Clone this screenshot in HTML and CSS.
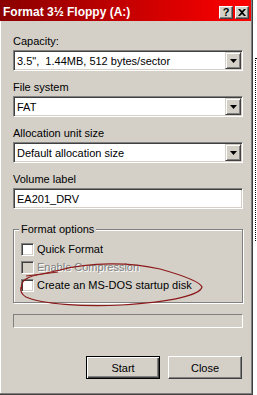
FILE: index.html
```html
<!DOCTYPE html>
<html lang="en">

<head>
  <meta charset="UTF-8">
  <title>Format 3½ Floppy (A:)</title>
  <link rel="stylesheet" href="styles.css">
</head>

<body>
  <div class="window">
    <div class="titlebar">
      <span class="title">Format 3½ Floppy (A:)</span>
      <div class="title-buttons">
        <span class="tbtn">?</span>
        <span class="tbtn">
          <svg width="8" height="7" viewBox="0 0 8 7"><path d="M0 0h2l2 2 2-2h2L5 3.5 8 7H6L4 5 2 7H0l3-3.5z" fill="#000"/></svg>
        </span>
      </div>
    </div>

    <div class="content">
      <div class="field-label">Capacity:</div>
      <div class="combo">
        <span class="combo-text">3.5",&nbsp; 1.44MB, 512 bytes/sector</span>
        <span class="combo-btn"><svg width="7" height="4" viewBox="0 0 7 4"><path d="M0 0h7L3.5 4z" fill="#000"/></svg></span>
      </div>

      <div class="field-label">File system</div>
      <div class="combo">
        <span class="combo-text">FAT</span>
        <span class="combo-btn"><svg width="7" height="4" viewBox="0 0 7 4"><path d="M0 0h7L3.5 4z" fill="#000"/></svg></span>
      </div>

      <div class="field-label">Allocation unit size</div>
      <div class="combo">
        <span class="combo-text">Default allocation size</span>
        <span class="combo-btn"><svg width="7" height="4" viewBox="0 0 7 4"><path d="M0 0h7L3.5 4z" fill="#000"/></svg></span>
      </div>

      <div class="field-label">Volume label</div>
      <div class="textbox">EA201_DRV</div>

      <div class="group">
        <div class="group-title">Format options</div>
        <div class="options">
          <div class="option"><span class="check"></span>Quick Format</div>
          <div class="option disabled"><span class="check"></span>Enable Compression</div>
          <div class="option"><span class="check"></span>Create an MS-DOS startup disk</div>
        </div>
      </div>

      <div class="progress"></div>

      <div class="actions">
        <button class="btn default">Start</button>
        <button class="btn">Close</button>
      </div>
    </div>

    <!-- hand drawn mark over the options -->
    <svg class="scribble" width="253" height="395" viewBox="0 0 253 395">
      <path d="M22 289 C19 281 28 276 42 274 L60 270 C90 262 130 262 160 269 C185 276 200 282 202 287 C200 295 172 302 122 305 C82 307 42 304 26 297 C21 294 20 291 21 287" fill="none" stroke="#8c1a1a" stroke-width="1.2"/>
      <path d="M26 276 L58 272" fill="none" stroke="#8c1a1a" stroke-width="1.1"/>
    </svg>
  </div>

  <!-- edge of whatever sits behind the dialog -->
  <div class="edge"></div>
</body>

</html>
```

FILE: styles.css
```css
body {
  margin: 0;
  background: #fff;
  font-family: "Liberation Sans", Arial, sans-serif;
  font-size: 11px;
  color: #000;
  display: flex;
  align-items: flex-start;
}

.window {
  position: relative;
  flex: none;
  width: 253px;
  height: 395px;
  box-sizing: border-box;
  background: #d4d0c8;
  border-right: 1px solid #404040;
  border-bottom: 1px solid #404040;
  box-shadow: inset -1px -1px #808080, inset 1px 0 #fff;
  display: flex;
  flex-direction: column;
}

.titlebar {
  height: 21px;
  margin-right: 1px;
  padding: 0 2px 0 3px;
  background: linear-gradient(90deg, #8a0000, #ff0000);
  display: flex;
  align-items: center;
  justify-content: space-between;
}

.title {
  color: #fff;
  font-weight: bold;
  font-size: 12px;
  padding-top: 3px;
}

.title-buttons {
  display: flex;
  gap: 2px;
  padding-top: 3px;
}

.tbtn {
  width: 14px;
  height: 13px;
  box-sizing: border-box;
  background: #d4d0c8;
  border: 1px solid;
  border-color: #fff #404040 #404040 #fff;
  box-shadow: inset -1px -1px #808080;
  display: flex;
  align-items: center;
  justify-content: center;
  font-weight: bold;
  font-size: 11px;
}

.content {
  padding: 14px 9px 0 13px;
  display: flex;
  flex-direction: column;
}

.field-label {
  line-height: 13px;
  margin-bottom: 2px;
}

.combo,
.textbox {
  height: 21px;
  box-sizing: border-box;
  margin-bottom: 10px;
  background: #fff;
  border: 1px solid;
  border-color: #808080 #fff #fff #808080;
  box-shadow: inset 1px 1px #404040, inset -1px -1px #d4d0c8;
  display: flex;
  align-items: center;
  padding: 1px 1px 1px 3px;
}

.combo-text {
  flex: 1;
}

.combo-btn {
  width: 16px;
  height: 17px;
  box-sizing: border-box;
  background: #d4d0c8;
  border: 1px solid;
  border-color: #d4d0c8 #404040 #404040 #d4d0c8;
  box-shadow: inset 1px 1px #fff, inset -1px -1px #808080;
  display: flex;
  align-items: center;
  justify-content: center;
}

.group {
  margin-top: 10px;
  border: 1px solid #808080;
  box-shadow: inset 1px 1px #fff, 1px 1px #fff;
  padding: 0 8px 8px 7px;
}

.group-title {
  width: fit-content;
  margin: -7px 0 0 -2px;
  padding: 0 2px;
  line-height: 13px;
  background: #d4d0c8;
}

.options {
  margin-top: 4px;
}

.option {
  height: 18px;
  display: flex;
  align-items: center;
  gap: 3px;
}

.check {
  width: 13px;
  height: 13px;
  box-sizing: border-box;
  background: #fff;
  border: 1px solid;
  border-color: #808080 #fff #fff #808080;
  box-shadow: inset 1px 1px #404040, inset -1px -1px #d4d0c8;
}

.option.disabled {
  color: #808080;
  text-shadow: 1px 1px #fff;
}

.option.disabled .check {
  background: #d4d0c8;
}

.progress {
  height: 14px;
  box-sizing: border-box;
  margin-top: 11px;
  border: 1px solid;
  border-color: #808080 #fff #fff #808080;
}

.actions {
  margin-top: 28px;
  display: flex;
  justify-content: flex-end;
  gap: 8px;
  padding-right: 1px;
}

.btn {
  width: 74px;
  height: 23px;
  box-sizing: border-box;
  background: #d4d0c8;
  font-family: inherit;
  font-size: 11px;
  color: #000;
  padding: 0;
  border: 1px solid;
  border-color: #fff #404040 #404040 #fff;
  box-shadow: inset -1px -1px #808080;
}

.btn.default {
  border-color: #000;
  box-shadow: inset 1px 1px #fff, inset -1px -1px #404040, inset -2px -2px #808080;
}

.scribble {
  position: absolute;
  left: 0;
  top: 0;
  pointer-events: none;
}

.edge {
  width: 2px;
  height: 182px;
  margin: 58px 0 0 2px;
  border-left: 1px dotted #000;
  border-top: 1px solid #000;
}
```
